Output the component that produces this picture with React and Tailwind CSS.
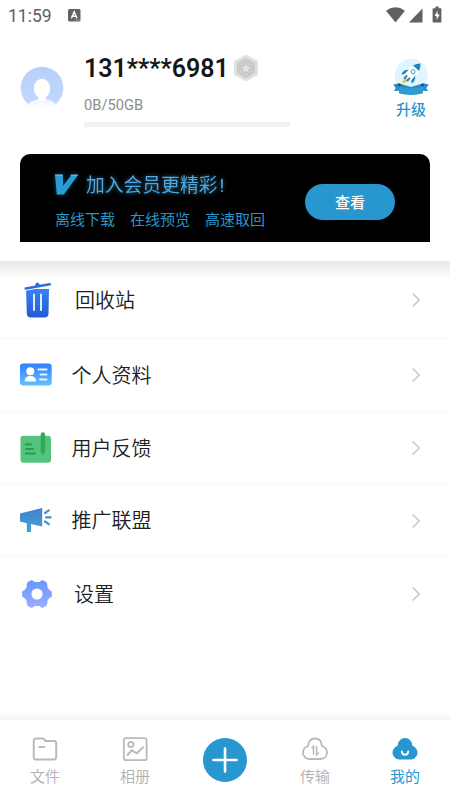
import React from 'react';

const BLUE = '#2896cf';

function StatusBar() {
  return (
    <header className="flex h-8 items-start pl-2 text-[#5e5e5e]">
      <span className="mt-[5px] w-[60px] text-[17.5px] leading-[22px]">11:59</span>
      <svg className="mt-[9px]" width="13" height="13" viewBox="0 0 13 13">
        <rect width="12.5" height="12.5" rx="1.5" fill="#626262" />
        <path d="M3.4 9.2 6.2 2.8 9 9.2M4.4 7.2H8" fill="none" stroke="#fff" strokeWidth="1.5" />
        <path d="M6.5 10.9h5" stroke="#aaa" strokeWidth=".8" />
      </svg>
      <svg className="ml-[305px] mt-[6px]" width="56" height="18" viewBox="0 0 56 18">
        <path d="M0 4.7Q9.5-2.2 19 4.7L9.5 16.5Z" fill="#616161" />
        <path d="M36.5 2.6V16.5H23Z" fill="#616161" />
        <path d="M49.5 .5h3.2v1.8h2q.7 0 .7.8v12.6q0 .8-.8.8h-7.2q-.8 0-.8-.8V3.1q0-.8.8-.8h2.1Z" fill="#616161" />
        <path d="m51.6 4.5-3 5.400h2v4.200l3.100-5.700h-2.100Z" fill="#fff" />
      </svg>
    </header>
  );
}

function Avatar() {
  return (
    <svg width="44" height="44" viewBox="0 0 44 44">
      <defs>
        <linearGradient id="avatar" x1="0" y1="0" x2="0" y2="1">
          <stop offset="0" stopColor="#b8cff9" />
          <stop offset="1" stopColor="#c2d8ff" />
        </linearGradient>
        <linearGradient id="shoulders" x1="0" y1="0" x2="0" y2="1">
          <stop offset="0" stopColor="#edf3ff" />
          <stop offset="1" stopColor="#fff" />
        </linearGradient>
      </defs>
      <path d="M8.300 38.300A21.300 21.300 0 1 1 35.700 38.300Z" fill="url(#avatar)" />
      <path d="M7.500 38.800q3-4.300 10.500-5.600h8q7.500 1.300 10.500 5.600Q22 47 7.500 38.800Z" fill="url(#shoulders)" />
      <ellipse cx="22" cy="22.500" rx="8.200" ry="9.800" fill="#fff" />
      <path d="M18 29h8v3q0 3-4 3.500-4-.5-4-3.500Z" fill="#fff" />
    </svg>
  );
}

function Badge() {
  return (
    <svg width="26" height="28" viewBox="0 0 26 28">
      <path d="M13 1.500 24 7.700v12.600L13 26.500 2 20.300V7.700Z" fill="#e2e2e2" stroke="#e2e2e2" strokeWidth="2" strokeLinejoin="round" />
      <path d="M13 4 21.700 9v10L13 24 4.300 19V9Z" fill="#ccc" stroke="#ccc" strokeWidth="1" strokeLinejoin="round" />
      <path d="m13 7.500 1.700 4.700 5 .1-4 3 1.500 4.800-4.200-2.800-4.200 2.800 1.500-4.800-4-3 5-.1Z" fill="#e2e2e2" stroke="#b5b5b5" strokeWidth=".6" />
    </svg>
  );
}

function Rocket() {
  return (
    <svg width="36" height="39" viewBox="0 0 36 39">
      <circle cx="18.200" cy="17" r="16.300" fill="#dff6ff" />
      <path d="M.2 26.500 5.600 25.200 18 29 30.400 25.200 35.800 26.500 33.300 30l1.700 3-5-.2v2.500q-12 3.500-24 0v-2.500L1 33l1.700-3Z" fill="#258fc5" />
      <path d="M5.700 25.200v3.300l3-1.500ZM30.300 25.200v3.300l-3-1.500Z" fill="#153d59" />
      <path d="M6 28.800Q18 32 30 28.800v5.500q-12 3.900-24 0Z" fill="#2f9dd3" />
      <g transform="translate(19 14.700) rotate(42)">
        <path d="M-1.600 7.500Q-3 11 0 14.300 3 11 1.600 7.500Z" fill="#f8bd42" />
        <path d="M-4.200 0Q-8.300 3.200-6.900 8.300L-3.900 5.500ZM4.200 0Q8.300 3.200 6.900 8.300L3.900 5.500Z" fill="#2185bb" />
        <path d="M0-12.500Q4.500-8.300 4.500-2.200V7.200H-4.500V-2.200Q-4.500-8.300 0-12.500Z" fill="#fff" />
        <path d="M0-12.500Q3.100-9.800 4.100-6H-4.100Q-3.100-9.800 0-12.500Z" fill="#2185bb" />
        <circle cy="-1.500" r="2" fill="#fff" stroke="#57abd5" strokeWidth="1.100" />
        <path d="M-2.900 5.300h2v4.300h-2ZM.9 5.300h2v4.300h-2Z" fill="#2185bb" />
      </g>
    </svg>
  );
}

function Profile() {
  return (
    <section className="flex h-[122px] items-start pl-5">
      <div className="mt-[34px]"><Avatar /></div>
      <div className="ml-5 mt-[22px] w-[206px]">
        <div className="flex h-[30px] items-center">
          <h1 className="w-[148px] shrink-0 whitespace-nowrap text-[25px] font-semibold leading-[30px] text-[#171717]">131****6981</h1>
          <div className="-mt-[2px] ml-px shrink-0"><Badge /></div>
        </div>
        <p className="mt-[11px] text-[14.700px] leading-5 text-[#8c8c8c]">0B/50GB</p>
        <div className="mt-[7px] h-[5px] bg-[#f2f2f2]" />
      </div>
      <div className="ml-[103px] mt-[26px] flex flex-col items-center">
        <Rocket />
        <span className="mt-[2px] text-[15px] font-medium leading-[22px] text-[#2896cf]">升级</span>
      </div>
    </section>
  );
}

function MemberBanner() {
  return (
    <section className="mx-5 flex h-[88px] items-start rounded-t-[10px] bg-black pl-[35px] text-[#2b94c9]">
      <div className="w-[250px] whitespace-nowrap">
        <div className="mt-[17px] flex h-[28px] items-center">
          <svg width="24" height="22" viewBox="0 0 24 22" className="drop-shadow-[0_0_2px_#174a65]">
            <path d="M0 1H8V12L16.500 1H23L8.800 20.500H1.800Z" fill="#2b9bd8" />
            <path d="M0 1h7.800M15.700 1.100H23" stroke="#7bc9f1" strokeWidth="1" />
          </svg>
          <h2 className="ml-[7px] mt-px bg-gradient-to-b from-[#58aceb] to-[#39a3dc] bg-clip-text text-[18.800px] font-normal leading-[28px] text-transparent drop-shadow-[0_0_2px_#37738f]">加入会员更精彩<span className="ml-[2px]">!</span></h2>
        </div>
        <div className="mt-[10px] flex gap-[15px] text-[15px] leading-[22px]">
          <span>离线下载</span><span>在线预览</span><span>高速取回</span>
        </div>
      </div>
      <button className="mt-[30px] h-[36px] w-[90px] rounded-full bg-[#2896cf] pt-[2px] text-[15px] font-medium leading-[34px] text-white">查看</button>
    </section>
  );
}

const TrashIcon = () => (
  <svg width="32" height="38" viewBox="0 0 32 38">
    <defs><linearGradient id="trash" x1="0" y1="0" x2="0" y2="1"><stop stopColor="#3981f5" /><stop offset="1" stopColor="#245acf" /></linearGradient></defs>
    <path d="M6 8H29L28.500 32.500Q28.500 36.500 24.500 36.500H11Q7 36.500 6.800 32.500Z" fill="url(#trash)" />
    <path d="m5.500 8.200 24.500-4.400" stroke="#fff" strokeWidth="3" />
    <path d="m5.800 7.500 24-4.300" stroke="#2d6ddd" strokeWidth="2.600" strokeLinecap="round" />
    <path d="m16 4.500.5-1.700q.8-.8 1.600 0l.8 1Z" fill="#2d6ddd" stroke="#2d6ddd" strokeWidth="1.500" />
    <path d="M14 13.500V29M21 13.500V29" stroke="#e0edff" strokeWidth="2" strokeLinecap="round" />
  </svg>
);

const CardIcon = () => (
  <svg width="32" height="38" viewBox="0 0 32 38">
    <defs><linearGradient id="idcard" x1="0" y1="0" x2="0" y2="1"><stop stopColor="#317eff" /><stop offset="1" stopColor="#65bffe" /></linearGradient></defs>
    <rect y="7.500" width="31.700" height="22" rx="3.200" fill="url(#idcard)" />
    <circle cx="10.300" cy="15.300" r="4" fill="#fff" />
    <path d="M4.700 25.500q0-5.500 5.600-5.500t6 5.500Z" fill="#fff" />
    <path d="M18.500 13.500h8M20.500 18.500h6M20 23.500h6.500" stroke="#e5f6ff" strokeWidth="2" strokeLinecap="round" />
  </svg>
);

const FeedbackIcon = () => (
  <svg width="32" height="38" viewBox="0 0 32 38">
    <rect x=".5" y="6.700" width="30.500" height="27" rx="3" fill="#54c37d" />
    <path d="M6 15.300h5M6 20h7M6 24.500h9" stroke="#279b51" strokeWidth="2.200" strokeLinecap="round" />
    <path d="M20.700 5.500q0-2.200 2.200-2.200t2.200 2.200v17l-2.200 4-2.200-4Z" fill="#2eaa58" />
  </svg>
);

const PromotionIcon = () => (
  <svg width="32" height="38" viewBox="0 0 32 38">
    <defs><linearGradient id="horn" x1="0" y1="0" x2="0" y2="1"><stop stopColor="#407fca" /><stop offset="1" stopColor="#45a5d2" /></linearGradient></defs>
    <path d="M0 11.500 22.200 6V24.500L11 22V30H6.800V21.300L0 19.500Z" fill="url(#horn)" />
    <path d="m25 11 3.800-2.600M26 15.300h4.700M25 19.500l3.800 2.700" stroke="#4492cd" strokeWidth="2.200" strokeLinecap="round" />
  </svg>
);

const SettingsIcon = () => (
  <svg width="32" height="38" viewBox="0 0 32 38">
    <defs><linearGradient id="gear" x1="0" y1="0" x2="0" y2="1"><stop stopColor="#6797fd" /><stop offset="1" stopColor="#9aaeff" /></linearGradient></defs>
    <path fillRule="evenodd" d="M11 5.300Q12.200 4.900 13 5.800L14.500 7H19.500L21 5.800Q21.800 4.900 23 5.300L26 6.900Q27.300 7.800 27.200 9.200L27.500 12.500L29.700 15.200L30.900 15.800Q31.900 16.300 31.900 17.500V20.500Q31.900 21.700 30.900 22.200L29.700 22.800L27.500 25.500L27.200 28.800Q27.300 30.200 26 31.100L23 32.700Q21.800 33.100 21 32.200L19.500 31H14.500L13 32.200Q12.200 33.100 11 32.700L8 31.100Q6.700 30.200 6.800 28.800L6.500 25.500L4.300 22.800L3.100 22.200Q2.100 21.700 2.100 20.500V17.500Q2.100 16.300 3.100 15.800L4.300 15.200L6.500 12.500L6.800 9.200Q6.700 7.800 8 6.900ZM17 13.400A5.600 5.600 0 1 0 17 24.600 5.600 5.600 0 1 0 17 13.400Z" fill="url(#gear)" />
  </svg>
);

function MenuRow({ icon: Icon, label, height, textOffset }) {
  return (
    <button className={`flex w-full items-center border-b border-[#f7f7f7] pl-5 pr-[28px] text-left ${height}`}>
      <Icon />
      <span className={`pt-px text-[20px] font-[350] leading-[28px] text-[#202020] ${textOffset}`}>{label}</span>
      <svg className="ml-auto" width="12" height="16" viewBox="0 0 12 16"><path d="m2.700 1.500 6.500 6.500-6.500 6.500" fill="none" stroke="#c7c7c7" strokeWidth="1.500" /></svg>
    </button>
  );
}

const rows = [
  { label: '回收站', icon: TrashIcon, height: 'h-[78px] pt-px', textOffset: 'ml-[23px]' },
  { label: '个人资料', icon: CardIcon, height: 'h-[73px]', textOffset: 'ml-[19.500px]' },
  { label: '用户反馈', icon: FeedbackIcon, height: 'h-[73px]', textOffset: 'ml-[19.500px]' },
  { label: '推广联盟', icon: PromotionIcon, height: 'h-[72px]', textOffset: 'ml-[19.500px]' },
  { label: '设置', icon: SettingsIcon, height: 'h-[75px] border-transparent', textOffset: 'ml-[22px]' },
];

const cloud = 'M7.2 10C7.2 5.300 10 2.500 14 2.500S20.800 5.300 20.800 10C24 11 26 13.400 26 16.500C26 20.400 23.300 23 19.500 23H8.500C4.700 23 2 20.400 2 16.500C2 13.400 4 11 7.200 10Z';

function FilesIcon() {
  return <svg width="28" height="26" viewBox="0 0 28 26" fill="none" stroke="#b9b9b9" strokeWidth="1.900"><path d="M5 2.500H12Q13 2.500 13.500 3.700L14.500 5H23Q25.200 5 25.200 7.200V21Q25.200 23.500 23 23.500H5Q2.700 23.500 2.700 21V5Q2.700 2.500 5 2.500Z" /><path d="M8.300 11h5" strokeLinecap="round" /></svg>;
}
function PhotosIcon() {
  return <svg width="28" height="26" viewBox="0 0 28 26" fill="none" stroke="#b9b9b9" strokeWidth="1.800"><rect x="2.800" y="2.200" width="22.800" height="22" rx="2" /><circle cx="9.800" cy="8.500" r="2.600" /><path d="m6 19.500 4.800-5.200 5.100 3 6.800-6.700" strokeWidth="2" /></svg>;
}
function TransferIcon() {
  return <svg width="28" height="26" viewBox="0 0 28 26" fill="none" stroke="#b9b9b9" strokeWidth="1.800"><path d={cloud} /><path d="m10.500 12.300 2-2v8.500M17.700 16.700l-2.100 2v-8.500" strokeWidth="1.500" /></svg>;
}
function MineIcon() {
  return <svg width="28" height="26" viewBox="0 0 28 26"><path d={cloud} fill={BLUE} stroke={BLUE} strokeWidth="1" /><path d="M10.800 15.500q.2 3.300 3.200 3.300t3.200-3.300" fill="none" stroke="#fff" strokeWidth="1.900" strokeLinecap="round" /></svg>;
}

function Tab({ icon: Icon, label, active }) {
  return (
    <button className={`flex flex-col items-center pt-[16px] text-[15px] leading-[20px] ${active ? 'text-[#2896cf]' : 'font-[350] text-[#b0b0b0]'}`}>
      <Icon /><span className="mt-[5px]">{label}</span>
    </button>
  );
}

export default function App() {
  return (
    <main className="flex h-[801px] w-[450px] flex-col overflow-hidden bg-white font-['Roboto','Noto_Sans_CJK_SC',sans-serif]">
      <StatusBar />
      <Profile />
      <MemberBanner />
      <nav className="mt-[19px] bg-[linear-gradient(to_bottom,#e9e9e9_0,#f4f4f4_9px,#ffffff_19px)]">
        {rows.map((row) => <MenuRow key={row.label} {...row} />)}
      </nav>
      <div className="mt-auto h-[8px] bg-gradient-to-b from-white to-[#f3f3f3]" />
      <footer className="grid h-[81px] shrink-0 grid-cols-5 bg-white">
        <Tab icon={FilesIcon} label="文件" />
        <Tab icon={PhotosIcon} label="相册" />
        <button className="flex justify-center pt-[18px]">
          <svg width="44" height="44" viewBox="0 0 44 44"><circle cx="22" cy="22" r="22" fill={BLUE} /><path d="M22 10.500v23M10.500 22h23" stroke="#fff" strokeWidth="2.600" strokeLinecap="round" /></svg>
        </button>
        <Tab icon={TransferIcon} label="传输" />
        <Tab icon={MineIcon} label="我的" active />
      </footer>
    </main>
  );
}
